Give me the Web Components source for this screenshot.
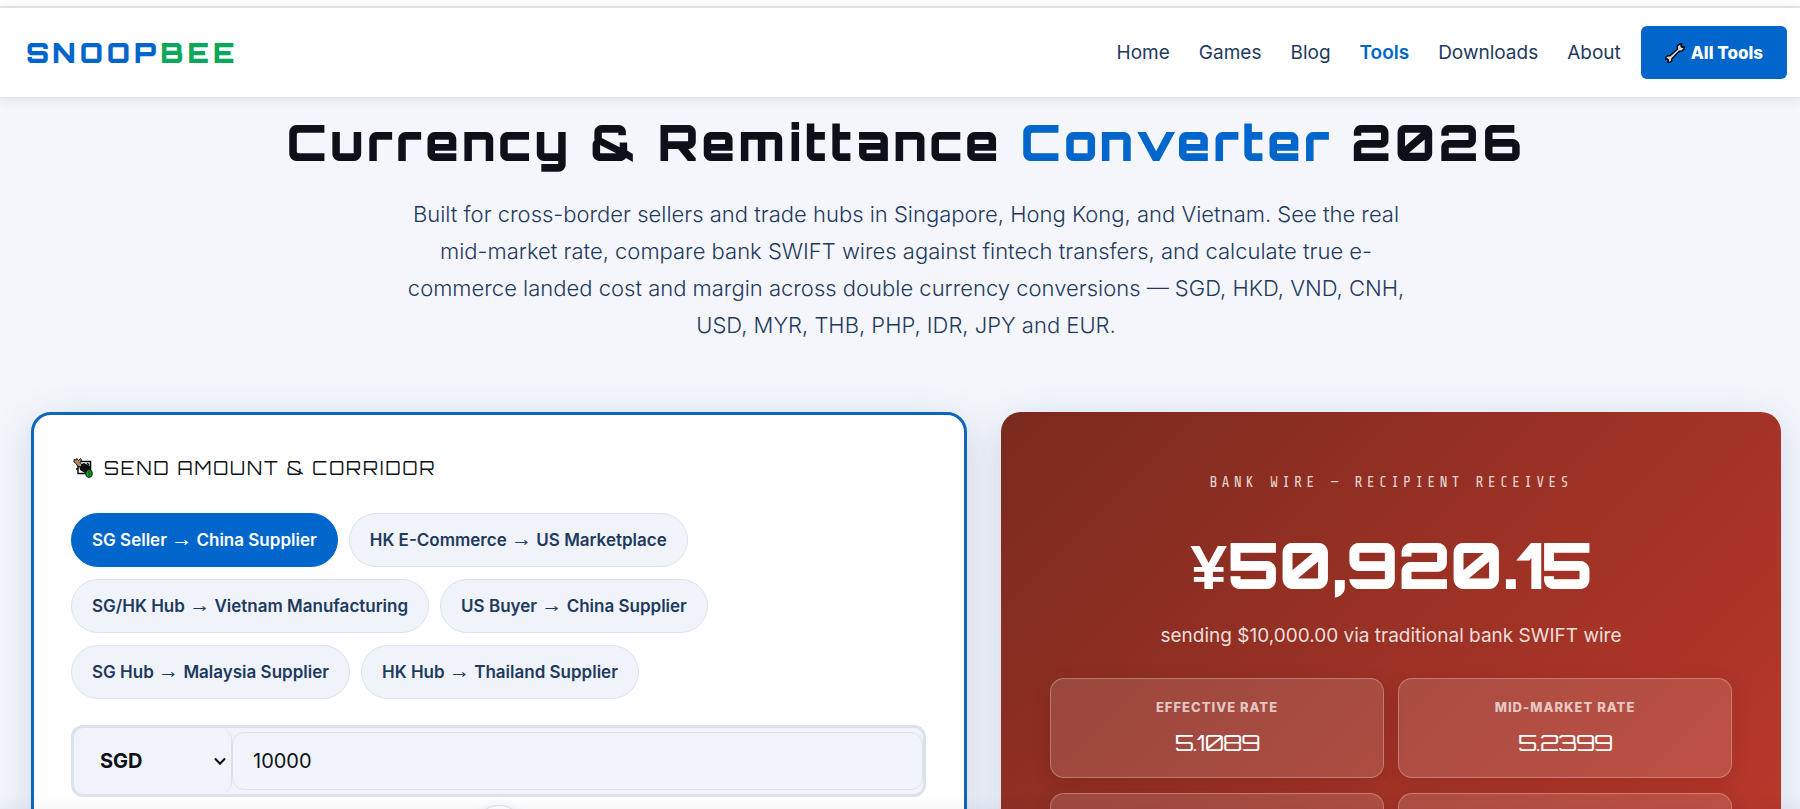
<!DOCTYPE html>
<html lang="en">
<head>
<meta charset="utf-8">
<meta name="viewport" content="width=device-width, initial-scale=1">
<title>Currency &amp; Remittance Converter 2026 | SnoopBee</title>
<style>
  :root {
    --blue: #0066cc;
    --green: #0aa858;
    --ink: #0d1018;
    --navy: #1e3a5f;
    --soft: #f0f3fa;
    --line: #dce2ec;
    --display: Orbitron, "DejaVu Sans", sans-serif;
    --mono: "Share Tech Mono", "Liberation Mono", monospace;
  }
  body {
    margin: 0;
    background: #f4f6fb;
    color: var(--navy);
    font-family: Inter, "Noto Sans", sans-serif;
    overflow-x: hidden;
  }
</style>
</head>
<body>
<converter-page></converter-page>

<script>
const define = (name, html) => {
  const template = document.createElement('template');
  template.innerHTML = html;
  customElements.define(name, class extends HTMLElement {
    constructor() {
      super();
      this.attachShadow({ mode: 'open' }).append(template.content.cloneNode(true));
    }
  });
};

define('brand-logo', `
<style>
  :host { display: block; }
  a { font: 900 28px/36px var(--display); letter-spacing: 4px; color: var(--blue); text-decoration: none; }
  span { color: var(--green); }
</style>
<a href="#">SNOOP<span>BEE</span></a>`);

define('nav-link', `
<style>
  :host { display: block; }
  a { font-size: 19px; line-height: 24px; font-weight: 400; color: var(--navy); text-decoration: none; }
  :host([active]) a { color: var(--blue); font-weight: 600; }
</style>
<a href="#"><slot></slot></a>`);

define('tools-button', `
<style>
  :host { display: block; }
  button {
    display: flex; align-items: center; gap: 6px; height: 53px; padding: 0 24px;
    border: 0; border-radius: 6px; background: var(--blue); color: #fff;
    font: 800 17px/24px Inter, sans-serif; cursor: pointer; white-space: nowrap;
  }
  svg { width: 20px; height: 20px; }
</style>
<button type="button">
  <svg viewBox="0 0 20 20" aria-hidden="true">
    <path d="M12.500 6 12.300 3 14.800 1l1.700-.2-.5 2.500 1 1 2.300-.5-.4 2.200-2.300 2.100-2.400.1-7.300 7.500-.2 2.400-2 1.300-2.100-.3.900-2-1.100-1.100-2 .3.300-1.800 2-1.700 2.400-.1z" fill="#dcdcdc" stroke="#05070c" stroke-width="1.500" stroke-linejoin="round"/>
  </svg>
  <span><slot></slot></span>
</button>`);

define('site-header', `
<style>
  :host {
    display: flex; align-items: center; justify-content: space-between;
    box-sizing: border-box; height: 92px; padding: 0 13px 0 26px;
    background: #fff; border-top: 2px solid #e0e0e0; border-bottom: 1px solid #dae2f0;
    box-shadow: 0 2px 12px rgba(20, 50, 100, .1); position: relative;
  }
  nav { display: flex; align-items: center; gap: 29px; }
  tools-button { margin-left: -9px; }
</style>
<brand-logo></brand-logo>
<nav aria-label="Main">
  <nav-link>Home</nav-link>
  <nav-link>Games</nav-link>
  <nav-link>Blog</nav-link>
  <nav-link active>Tools</nav-link>
  <nav-link>Downloads</nav-link>
  <nav-link>About</nav-link>
  <tools-button>All Tools</tools-button>
</nav>`);

define('page-hero', `
<style>
  :host { display: block; text-align: center; padding: 14px 0 68px; }
  h1 { margin: 0 0 24px; font: 900 49px/60px var(--display); letter-spacing: 3px; color: var(--ink); }
  h1 span { color: var(--blue); }
  p { margin: 0 auto; max-width: 1000px; font-size: 22px; font-weight: 300; line-height: 37px; }
</style>
<h1>Currency &amp; Remittance <span>Converter</span> 2026</h1>
<p>Built for cross-border sellers and trade hubs in Singapore, Hong Kong, and Vietnam. See the real mid-market rate, compare bank SWIFT wires against fintech transfers, and calculate true e-commerce landed cost and margin across double currency conversions — SGD, HKD, VND, CNH, USD, MYR, THB, PHP, IDR, JPY and EUR.</p>`);

define('corridor-chip', `
<style>
  :host { display: block; }
  button {
    height: 54px; padding: 0 20px; border: 1px solid var(--line); border-radius: 27px;
    background: var(--soft); color: var(--navy);
    font: 600 17px/24px Inter, sans-serif; cursor: pointer; white-space: nowrap;
  }
  .arrow { font-family: "Liberation Sans", sans-serif; font-size: 21px; line-height: 1; font-weight: 400; }
  :host([selected]) button { background: var(--blue); border-color: var(--blue); color: #fff; }
</style>
<button type="button"><slot name="from"></slot> <span class="arrow">→</span> <slot name="to"></slot></button>`);

define('amount-field', `
<style>
  :host {
    display: flex; align-items: center; box-sizing: border-box; height: 72px;
    border: 3px solid var(--line); border-radius: 12px; background: var(--soft); overflow: hidden;
  }
  .currency { position: relative; display: flex; height: 100%; width: 158px; flex: none; }
  select {
    appearance: none; width: 100%; height: 100%; padding: 0 26px; margin: 0;
    border: 0; border-right: 1px solid var(--line); border-radius: 12px; background: transparent;
    color: var(--ink); font: 700 20px/24px Inter, sans-serif;
  }
  svg { position: absolute; right: 5px; top: 26px; width: 14px; height: 14px; pointer-events: none; }
  input {
    flex: 1; min-width: 0; box-sizing: border-box; height: 58px; padding: 0 20px;
    border: 1px solid var(--line); border-radius: 12px; background: transparent;
    color: var(--ink); font: 400 20px/24px Inter, sans-serif;
  }
</style>
<div class="currency">
  <select aria-label="Currency"><option>SGD</option><option>HKD</option><option>USD</option></select>
  <svg viewBox="0 0 14 14" aria-hidden="true"><path d="m2 4.500 5 5.200 5-5.200" fill="none" stroke="#0d1018" stroke-width="2"/></svg>
</div>
<input aria-label="Amount" inputmode="decimal" value="10000">`);

define('send-card', `
<style>
  :host {
    display: flex; flex-direction: column; box-sizing: border-box; min-width: 0;
    padding: 39px 38px 39px 37px; background: #fff; border: 3px solid #0f66bd; border-radius: 20px;
    box-shadow: 0 8px 40px rgba(20, 60, 130, .16);
  }
  h2 {
    display: flex; align-items: center; gap: 11px; margin: 0 0 31px;
    font: 400 18px/28px var(--display); letter-spacing: 2px; color: var(--ink);
  }
  h2 svg { width: 20px; height: 20px; margin-left: 2px; }
  .chips { display: flex; flex-wrap: wrap; gap: 12px 11px; max-width: 680px; margin-bottom: 26px; }
  .swap {
    align-self: center; width: 52px; height: 52px; margin: 8px 0; padding: 0;
    border: 1px solid var(--line); border-radius: 50%; background: #fff;
    box-shadow: 0 2px 10px rgba(20, 60, 130, .12);
  }
  .swap svg { width: 20px; height: 20px; }
</style>
<h2>
  <svg viewBox="0 0 20 20" aria-hidden="true">
    <path d="M5 3.500h12.500v12H5z" fill="#fff" stroke="#080808" stroke-width="1.500"/>
    <path d="m6 7 5-2 6 3v6l-5 1-5-3z" fill="#080808"/>
    <path d="m1 1.500 2 .5.8-1.500L5.500 2.500 7.500.5 8.500 2 7 4.500l2 2.500-1.500 2-3-1L3 5.500 1 4z" fill="#b28b6b" stroke="#1d120b" stroke-width="1"/>
    <path d="M3 11h2M14 5l2 2" stroke="#080808" stroke-width="1.500"/>
    <ellipse cx="16" cy="15.500" rx="3.200" ry="3.800" fill="#18a52b" stroke="#06220a" stroke-width="1.200"/>
    <path d="M17 13.800c-2-.7-2 1.400-.8 1.700s1 2.200-1 1.500" fill="none" stroke="#06450e"/>
  </svg>
  SEND AMOUNT &amp; CORRIDOR
</h2>
<div class="chips">
  <corridor-chip selected><span slot="from">SG Seller</span><span slot="to">China Supplier</span></corridor-chip>
  <corridor-chip><span slot="from">HK E-Commerce</span><span slot="to">US Marketplace</span></corridor-chip>
  <corridor-chip><span slot="from">SG/HK Hub</span><span slot="to">Vietnam Manufacturing</span></corridor-chip>
  <corridor-chip><span slot="from">US Buyer</span><span slot="to">China Supplier</span></corridor-chip>
  <corridor-chip><span slot="from">SG Hub</span><span slot="to">Malaysia Supplier</span></corridor-chip>
  <corridor-chip><span slot="from">HK Hub</span><span slot="to">Thailand Supplier</span></corridor-chip>
</div>
<amount-field></amount-field>
<button class="swap" type="button" aria-label="Swap currencies">
  <svg viewBox="0 0 20 20" aria-hidden="true"><path d="M6 17V3M2 7l4-4 4 4M14 3v14M10 13l4 4 4-4" fill="none" stroke="#0066cc" stroke-width="2"/></svg>
</button>`);

define('rate-stat', `
<style>
  :host {
    display: flex; flex-direction: column; align-items: center; gap: 10px;
    box-sizing: border-box; height: 100px; padding: 18px 12px;
    border: 1px solid rgba(255, 255, 255, .28); border-radius: 14px; background: rgba(255, 255, 255, .13);
    box-shadow: 0 4px 20px rgba(60, 10, 10, .12);
  }
  .label { font-size: 13px; line-height: 20px; font-weight: 800; letter-spacing: 1px; color: rgba(255, 255, 255, .7); }
  .value { font: 400 23px/32px var(--display); letter-spacing: -1px; color: #fff; }
</style>
<span class="label"><slot name="label"></slot></span>
<span class="value"><slot></slot></span>`);

define('result-card', `
<style>
  :host {
    display: block; box-sizing: border-box; min-width: 0; padding: 59px 49px; text-align: center; color: #fff;
    border-radius: 20px; background: linear-gradient(135deg, #7b2a1f, #c0392b);
    box-shadow: 0 8px 40px rgba(20, 60, 130, .16);
  }
  .label { margin: 0 0 30px; font: 400 15px/24px var(--mono); letter-spacing: 4px; color: rgba(255, 255, 255, .8); }
  .amount { margin: 0 0 19px; font: 900 64px/80px var(--display); letter-spacing: -1px; }
  .amount span { font-family: "Liberation Mono", monospace; line-height: 1; }
  .note { margin: 0 0 30px; font-size: 19px; line-height: 24px; color: rgba(255, 255, 255, .85); }
  .stats { display: grid; grid-template-columns: 1fr 1fr; gap: 15px 14px; }
</style>
<p class="label">BANK WIRE — RECIPIENT RECEIVES</p>
<p class="amount"><span>¥</span>50,920.15</p>
<p class="note">sending $10,000.00 via traditional bank SWIFT wire</p>
<div class="stats">
  <rate-stat><span slot="label">EFFECTIVE RATE</span>5.1089</rate-stat>
  <rate-stat><span slot="label">MID-MARKET RATE</span>5.2399</rate-stat>
  <rate-stat></rate-stat>
  <rate-stat></rate-stat>
</div>`);

define('converter-page', `
<style>
  :host { display: block; height: 100vh; overflow: hidden; box-sizing: border-box; padding-top: 6px; background: linear-gradient(#fff 6px, transparent 6px); }
  main { padding: 0 19px 0 31px; }
  .cards { display: grid; grid-template-columns: 6fr 5fr; gap: 34px; }
  .shade { position: fixed; inset: auto 0 0; height: 14px; background: linear-gradient(transparent, rgba(20, 40, 90, .03)); pointer-events: none; }
</style>
<site-header></site-header>
<main>
  <page-hero></page-hero>
  <div class="cards">
    <send-card></send-card>
    <result-card></result-card>
  </div>
</main>
<div class="shade"></div>`);
</script>
</body>
</html>
